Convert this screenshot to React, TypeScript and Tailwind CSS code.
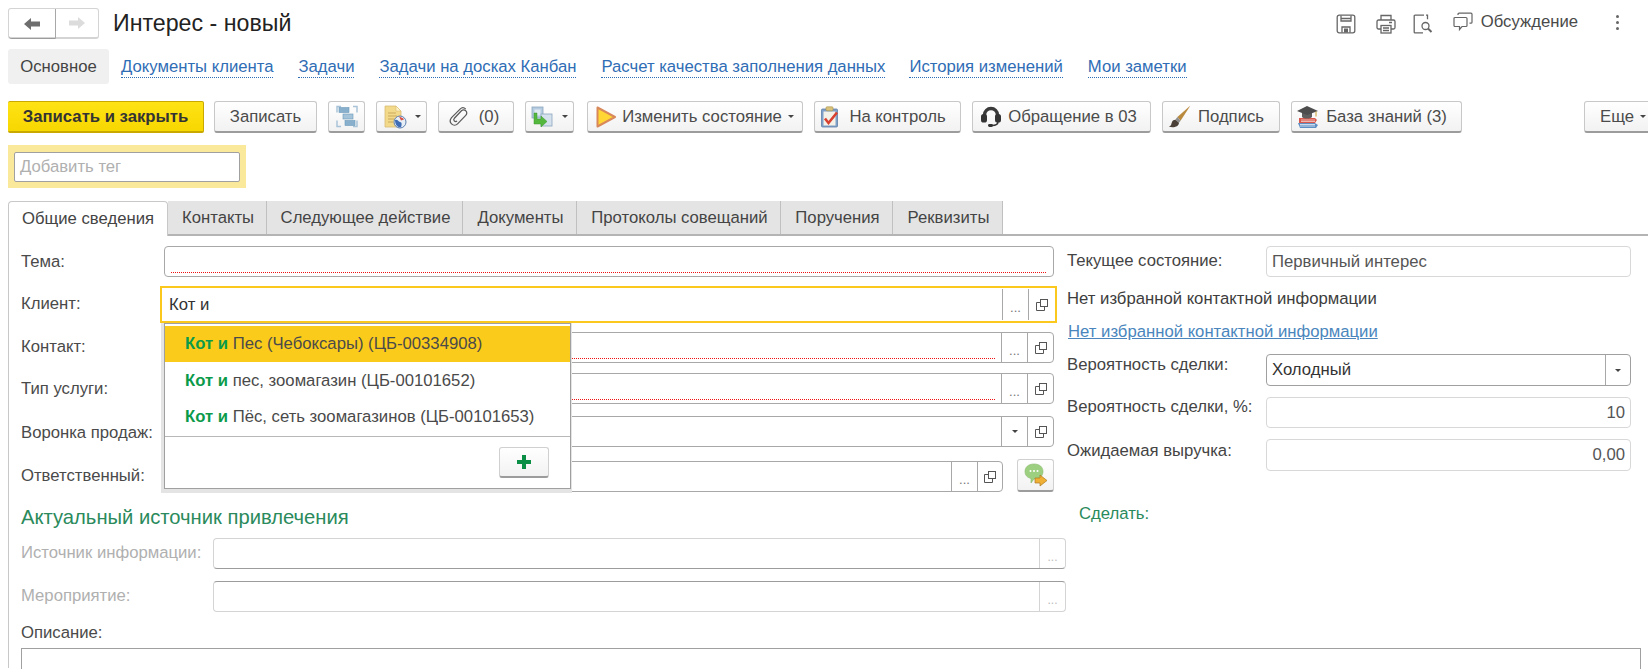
import React from "react";

const FONT = "font-['Liberation_Sans',Arial,sans-serif]";

function ArrowIcon({ dir, color }: { dir: "left" | "right"; color: string }) {
  return (
    <svg width="18" height="14" viewBox="0 0 18 14" className={dir === "right" ? "scale-x-[-1]" : ""}>
      <path d="M8 1 L1 7 L8 13 L8 9.5 L17 9.5 L17 4.5 L8 4.5 Z" fill={color} />
    </svg>
  );
}

function StructureIcon() {
  return (
    <svg width="22" height="23" viewBox="0 0 22 22">
      <path d="M1 7V1h4M1 15v6h4M21 7V1h-4M21 15v6h-4" fill="none" stroke="#a9c4d8" strokeWidth="1.5" />
      <rect x="3" y="2" width="10" height="5" fill="#88b0cd" stroke="#6b99bb" strokeWidth="0.6" />
      <rect x="7" y="8.500" width="10" height="5" fill="#a5c4da" stroke="#6b99bb" strokeWidth="0.6" />
      <rect x="9" y="15" width="10" height="5" fill="#88b0cd" stroke="#6b99bb" strokeWidth="0.6" />
    </svg>
  );
}

function DocGlobeIcon() {
  return (
    <svg width="24" height="24" viewBox="0 0 24 24">
      <path d="M2 1h11l5 5v16H2z" fill="#f3d98a" stroke="#d8bd74" strokeWidth="0.8" />
      <path d="M13 1v5h5z" fill="#fff3c8" stroke="#d8bd74" strokeWidth="0.6" />
      <path d="M5 8h8M5 11h9M5 14h6M5 17h5" stroke="#c9a95a" strokeWidth="1" />
      <circle cx="17" cy="17" r="6" fill="#e8eef6" stroke="#5c7fb0" strokeWidth="1" />
      <path d="M12 15c3-1 3 2 5 2s2 3 1 5c-3 1-6-2-6-7z" fill="#3f6db5" />
      <path d="M16 11.500c2 1 4 1 5 3l-3 1z" fill="#d9534a" />
    </svg>
  );
}

function PaperclipIcon() {
  return (
    <svg width="25" height="25" viewBox="0 0 22 22">
      <path
        d="M16.500 4.500 C15 3 13 3 11.500 4.500 L4 12 C2.500 13.800 2.500 16 4 17.500 C5.500 19 7.800 19 9.300 17.500 L16.500 10 C17.700 8.800 17.700 7 16.500 6 C15.400 5 13.800 5 12.700 6 L6.500 12.500 C5.800 13.300 5.800 14.300 6.500 15 C7.200 15.600 8.100 15.600 8.800 15"
        fill="none"
        stroke="#5a5a5a"
        strokeWidth="1.1"
      />
    </svg>
  );
}

function ArrowBoxesIcon() {
  return (
    <svg width="22" height="22" viewBox="0 0 22 22">
      <rect x="1" y="1" width="11" height="11" fill="#b4cbe0" stroke="#8aa5bd" strokeWidth="0.8" />
      <rect x="3.500" y="3.500" width="6" height="6" fill="#dfe9f2" />
      <rect x="10" y="8" width="11" height="12" fill="#d5e2ee" stroke="#8aa5bd" strokeWidth="0.8" />
      <path d="M6 7v6h4v-3l6 5.500-6 5.500v-3H3V7z" fill="#55b83e" stroke="#3a962c" strokeWidth="0.5" />
    </svg>
  );
}

function PlayIcon() {
  return (
    <svg width="20" height="22" viewBox="0 0 20 22">
      <path d="M1.500 1.500 L19 11 L1.500 20.500 Z" fill="#ffd633" stroke="#d8885a" strokeWidth="2" strokeLinejoin="round" />
    </svg>
  );
}

function ClipboardIcon() {
  return (
    <svg width="20" height="22" viewBox="0 0 20 22">
      <rect x="1.500" y="3" width="16" height="18" rx="1" fill="#7fa0c8" stroke="#5f7fa8" strokeWidth="0.8" />
      <rect x="3.500" y="5.500" width="12" height="14" fill="#f4f1e8" />
      <rect x="6" y="0.800" width="7" height="4" rx="1" fill="#d9c27a" stroke="#a8924f" strokeWidth="0.6" />
      <path d="M5 12.500 L8.500 17 L17 6.500" fill="none" stroke="#d8402f" strokeWidth="2.600" />
    </svg>
  );
}

function HeadsetIcon() {
  return (
    <svg width="22" height="23" viewBox="0 0 22 22">
      <path d="M4.500 12V9.500a6.500 6.500 0 0 1 13 0V12" fill="none" stroke="#3a3a3a" strokeWidth="3.400" />
      <rect x="1" y="8.500" width="6" height="8.500" rx="2.600" fill="#333" />
      <rect x="15" y="8.500" width="6" height="8.500" rx="2.600" fill="#333" />
      <path d="M18 16c0 3-3 4-6 4" fill="none" stroke="#333" strokeWidth="1.500" />
      <rect x="8" y="18.500" width="5" height="3" rx="1.400" fill="#333" />
    </svg>
  );
}

function BrushIcon() {
  return (
    <svg width="23" height="23" viewBox="0 0 22 22">
      <path d="M21.500 0.500 L9 11.500 L12 15 Z" fill="#b98a3e" />
      <path d="M9 11.500 L12 15 L10.500 17 L7 14 Z" fill="#8d8d8d" />
      <path d="M7 14 C4 14 3.500 17 3 19 C2.500 20 1.500 20.500 1 20.800 C5 22 10.500 21 10.500 17 Z" fill="#4a4038" />
    </svg>
  );
}

function BooksIcon() {
  return (
    <svg width="24" height="24" viewBox="0 0 24 24">
      <path d="M2 18h17l3 2-2 3H4z" fill="#5d8fc4" />
      <path d="M4 19.500h15M4 21h15" stroke="#e9eef5" strokeWidth="0.8" />
      <path d="M3 13h16l2 2-2 3H3z" fill="#d9574b" />
      <path d="M5 15h14M5 16.500h14" stroke="#f5e3de" strokeWidth="0.7" />
      <path d="M6 7v5c2 2 8 2 10 0V7z" fill="#5e5e5e" />
      <path d="M11 1 L22 6 L11 10 L1 6 Z" fill="#4d4d4d" />
      <path d="M20 6.500v5" stroke="#c9a030" strokeWidth="1" />
    </svg>
  );
}

function SaveIcon() {
  return (
    <svg width="20" height="20" viewBox="0 0 20 20" fill="none" stroke="#666" strokeWidth="1.300">
      <rect x="1.200" y="1.200" width="17.600" height="17.600" rx="2" />
      <path d="M5 1.500V7h10V1.500M5 4.500h10" />
      <path d="M6 18.500V13h8v5.500" />
      <rect x="8" y="14.500" width="4" height="4" fill="#666" stroke="none" />
    </svg>
  );
}

function PrintIcon() {
  return (
    <svg width="20" height="20" viewBox="0 0 20 20" fill="none" stroke="#666" strokeWidth="1.300">
      <path d="M5 6V1.500h10V6" />
      <path d="M5 15H2.500A1.500 1.500 0 0 1 1 13.500V7.500A1.500 1.500 0 0 1 2.500 6h15A1.500 1.500 0 0 1 19 7.500v6a1.500 1.500 0 0 1-1.500 1.500H15" />
      <rect x="5" y="11.500" width="10" height="7.500" />
      <path d="M7 14h6M7 16.500h6M13 8.500h3" />
    </svg>
  );
}

function PreviewIcon() {
  return (
    <svg width="20" height="20" viewBox="0 0 20 20" fill="none" stroke="#666" strokeWidth="1.300">
      <path d="M11 1.200H2.500A1 1 0 0 0 1.200 2.500v15a1 1 0 0 0 1.300 1.300H10M13 1.200h1.500v4" />
      <circle cx="12.500" cy="12" r="3.500" />
      <path d="M15 14.500l3.500 3.500" strokeWidth="2" />
    </svg>
  );
}

function ChatIcon() {
  return (
    <svg width="20" height="20" viewBox="0 0 20 20" fill="none" stroke="#666" strokeWidth="1.200">
      <path d="M2 5.500h11a1 1 0 0 1 1 1v7a1 1 0 0 1-1 1H9l-2.500 3v-3H2a1 1 0 0 1-1-1v-7a1 1 0 0 1 1-1z" />
      <path d="M5 3V2.200a1 1 0 0 1 1-1h12a1 1 0 0 1 1 1v8a1 1 0 0 1-1 1h-1.500" />
    </svg>
  );
}

function CopyIcon() {
  return (
    <svg width="12" height="12" viewBox="0 0 12 12" fill="none" stroke="#555" strokeWidth="1">
      <rect x="4.500" y="0.500" width="7" height="7" />
      <path d="M4.500 3.500H0.500V11.500H8.500V7.500" />
    </svg>
  );
}

function GreenChatIcon() {
  return (
    <svg width="24" height="24" viewBox="0 0 24 24">
      <path d="M10 1c5.500 0 9 3 9 7.500S15.500 16 10 16l-3 4v-4.500C3 14.500 1 12 1 8.500 1 4 4.500 1 10 1z" fill="#9ccf7f" stroke="#86b96a" strokeWidth="0.6" />
      <circle cx="6.500" cy="8" r="1" fill="#fff" />
      <circle cx="10" cy="8" r="1" fill="#fff" />
      <circle cx="13.500" cy="8" r="1" fill="#fff" />
      <path d="M11 15h5v-3l7 5.500-7 5.500v-3h-5z" fill="#f0b035" stroke="#a97a20" strokeWidth="0.7" />
    </svg>
  );
}

function Caret() {
  return <span className="inline-block w-0 h-0 border-x-[3.5px] border-x-transparent border-t-[3.5px] border-t-[#444]" />;
}

function ToolBtn({ className, children }: { className: string; children: React.ReactNode }) {
  return (
    <div
      className={`h-[32px] shrink-0 flex items-center justify-center rounded-[3px] border border-[#c8c8c8] border-b-[#9c9c9c] border-b-2 bg-gradient-to-b from-white to-[#f2f2f2] text-[16.7px] text-[#4b4b4b] whitespace-nowrap ${className}`}
    >
      {children}
    </div>
  );
}

function Toolbar() {
  return (
    <div className="flex gap-[11px] pl-[8px] mt-[17px]">
      <div className="h-[32px] w-[196px] mr-[-1px] shrink-0 flex items-center justify-center rounded-[2px] border border-[#c9a800] border-l-0 border-b-2 bg-gradient-to-b from-[#ffe314] to-[#f7d700] text-[16.7px] font-bold text-[#333]">
        Записать и закрыть
      </div>
      <ToolBtn className="w-[103px]">Записать</ToolBtn>
      <ToolBtn className="w-[37px]">
        <StructureIcon />
      </ToolBtn>
      <ToolBtn className="w-[51px] gap-[8px]">
        <DocGlobeIcon />
        <Caret />
      </ToolBtn>
      <ToolBtn className="w-[76px] gap-[7px] pr-[6px]">
        <PaperclipIcon />
        <span>(0)</span>
      </ToolBtn>
      <ToolBtn className="w-[49px] gap-[9px]">
        <ArrowBoxesIcon />
        <Caret />
      </ToolBtn>
      <ToolBtn className="w-[216px] ml-[2px] gap-[6px]">
        <PlayIcon />
        <span>Изменить состояние</span>
        <Caret />
      </ToolBtn>
      <ToolBtn className="w-[147px] gap-[9px] pr-[9px]">
        <ClipboardIcon />
        <span>На контроль</span>
      </ToolBtn>
      <ToolBtn className="w-[179px] gap-[6px] pr-[6px]">
        <HeadsetIcon />
        <span>Обращение в 03</span>
      </ToolBtn>
      <ToolBtn className="w-[118px] gap-[7px] pr-[10px]">
        <BrushIcon />
        <span>Подпись</span>
      </ToolBtn>
      <ToolBtn className="w-[171px] gap-[6px] pr-[10px]">
        <BooksIcon />
        <span>База знаний (3)</span>
      </ToolBtn>
      <ToolBtn className="w-[84px] ml-auto mr-[-20px] justify-start pl-[15px] gap-[6px]">
        <span>Еще</span>
        <Caret />
      </ToolBtn>
    </div>
  );
}

const links = [
  { text: "Документы клиента", cls: "ml-[12px]" },
  { text: "Задачи", cls: "ml-[25px]" },
  { text: "Задачи на досках Канбан", cls: "ml-[25px]" },
  { text: "Расчет качества заполнения данных", cls: "ml-[25px]" },
  { text: "История изменений", cls: "ml-[24px]" },
  { text: "Мои заметки", cls: "ml-[25px]" },
];

const tabs = [
  { text: "Контакты", cls: "w-[99px]" },
  { text: "Следующее действие", cls: "w-[196px]" },
  { text: "Документы", cls: "w-[114px]" },
  { text: "Протоколы совещаний", cls: "w-[204px]" },
  { text: "Поручения", cls: "w-[112px]" },
  { text: "Реквизиты", cls: "w-[110px]" },
];

function FieldBtn({ children, narrow }: { children: React.ReactNode; narrow?: boolean }) {
  return (
    <div className={`${narrow ? "w-[25px]" : "w-[26px]"} h-full shrink-0 flex items-center justify-center border-l border-[#a8a8a8] text-[#666]`}>{children}</div>
  );
}

function Dots() {
  return <span className="text-[13px] leading-none pt-[5px] text-[#777]">...</span>;
}

function Row({ label, labelCls, className, children }: { label: string; labelCls: string; className: string; children: React.ReactNode }) {
  return (
    <div className={`flex items-start ${className}`}>
      <div className={`w-[144px] shrink-0 text-[16.7px] leading-[20px] text-[#4a4a4a] ${labelCls}`}>{label}</div>
      {children}
    </div>
  );
}

function Required({ right }: { right: string }) {
  return <div className={`absolute left-[6px] bottom-[3px] border-b border-dotted border-[#f01010] ${right}`} />;
}

function LeftColumn() {
  return (
    <div className="w-[1046px] shrink-0 ml-[12px]">
      <Row label="Тема:" labelCls="pt-[6px]" className="mt-[10px]">
        <div className="relative w-[890px] ml-[-1px] h-[31px] rounded-[4px] border border-[#a8a8a8]">
          <Required right="right-[7px]" />
        </div>
      </Row>
      <Row label="Клиент:" labelCls="pt-[8px]" className="mt-[9px]">
        <div className="w-[897px] ml-[-5px] h-[37px] border-2 border-[#fbc91d] flex items-center pr-[1px]">
          <div className="flex-1 pl-[7px] text-[16.7px] text-[#333]">Кот и</div>
          <div className="flex h-[31px]">
            <FieldBtn>
              <Dots />
            </FieldBtn>
            <FieldBtn>
              <CopyIcon />
            </FieldBtn>
          </div>
        </div>
      </Row>
      <Row label="Контакт:" labelCls="pt-[5px]" className="mt-[9px]">
        <div className="relative w-[890px] ml-[-1px] h-[31px] rounded-[4px] border border-[#a8a8a8] flex justify-end">
          <Required right="right-[58px]" />
          <FieldBtn>
            <Dots />
          </FieldBtn>
          <FieldBtn>
            <CopyIcon />
          </FieldBtn>
        </div>
      </Row>
      <Row label="Тип услуги:" labelCls="pt-[6px]" className="mt-[10px]">
        <div className="relative w-[890px] ml-[-1px] h-[31px] rounded-[4px] border border-[#a8a8a8] flex justify-end">
          <Required right="right-[58px]" />
          <FieldBtn>
            <Dots />
          </FieldBtn>
          <FieldBtn>
            <CopyIcon />
          </FieldBtn>
        </div>
      </Row>
      <Row label="Воронка продаж:" labelCls="pt-[7px] whitespace-nowrap" className="mt-[12px]">
        <div className="w-[890px] ml-[-1px] h-[31px] rounded-[4px] border border-[#a8a8a8] flex justify-end">
          <FieldBtn>
            <Caret />
          </FieldBtn>
          <FieldBtn>
            <CopyIcon />
          </FieldBtn>
        </div>
      </Row>
      <Row label="Ответственный:" labelCls="pt-[5px] whitespace-nowrap" className="mt-[14px]">
        <div className="w-[839px] ml-[-1px] h-[31px] rounded-[4px] border border-[#a8a8a8] flex justify-end">
          <FieldBtn>
            <Dots />
          </FieldBtn>
          <FieldBtn narrow>
            <CopyIcon />
          </FieldBtn>
        </div>
        <div className="w-[37px] h-[33px] mt-[-2px] ml-[14px] flex items-center justify-center rounded-[3px] border border-[#d0d0d0] border-b-[#9c9c9c] border-b-2 bg-gradient-to-b from-white to-[#f2f2f2]">
          <GreenChatIcon />
        </div>
      </Row>
      <div className="mt-[13px] h-[24px] text-[20.2px] leading-[24px] text-[#2a8a5c] whitespace-nowrap">Актуальный источник привлечения</div>
      <div className="flex items-start mt-[9px]">
        <div className="w-[192px] shrink-0 text-[16.7px] leading-[20px] pt-[5px] text-[#b0b0b0] whitespace-nowrap">Источник информации:</div>
        <div className="w-[853px] h-[31px] rounded-[4px] border border-[#d4d4d4] border-b-[#9c9c9c] flex justify-end">
          <div className="w-[26px] border-l border-[#d4d4d4] flex items-center justify-center text-[#bbb] text-[12px] pt-[6px]">...</div>
        </div>
      </div>
      <div className="flex items-start mt-[12px]">
        <div className="w-[192px] shrink-0 text-[16.7px] leading-[20px] pt-[5px] text-[#b0b0b0]">Мероприятие:</div>
        <div className="w-[853px] h-[31px] rounded-[4px] border border-[#d4d4d4] border-t-[#9c9c9c] flex justify-end">
          <div className="w-[26px] border-l border-[#d4d4d4] flex items-center justify-center text-[#bbb] text-[12px] pt-[6px]">...</div>
        </div>
      </div>
    </div>
  );
}

function RoField({ className, children }: { className: string; children?: React.ReactNode }) {
  return (
    <div className={`w-[365px] h-[31px] rounded-[4px] border border-[#d8d8d8] flex items-center px-[5px] text-[16.7px] text-[#555] ${className}`}>{children}</div>
  );
}

function RightColumn() {
  return (
    <div className="w-[565px] shrink-0 text-[16.7px] text-[#444]">
      <div className="flex items-start mt-[10px]">
        <div className="w-[199px] shrink-0 leading-[20px] pt-[5px] whitespace-nowrap">Текущее состояние:</div>
        <RoField className="">Первичный интерес</RoField>
      </div>
      <div className="mt-[12px] h-[20px] leading-[20px] text-[#3d3d3d] whitespace-nowrap">Нет избранной контактной информации</div>
      <div className="mt-[13px] h-[20px] leading-[20px] pl-[1px] text-[#4a86bd] underline whitespace-nowrap">Нет избранной контактной информации</div>
      <div className="flex items-start mt-[12px]">
        <div className="w-[199px] shrink-0 leading-[20px] pt-[1px] whitespace-nowrap">Вероятность сделки:</div>
        <div className="w-[365px] h-[32px] rounded-[4px] border border-[#a0a0a0] flex items-center justify-between pl-[5px] text-[#333]">
          <span>Холодный</span>
          <div className="w-[25px] h-full border-l border-[#a8a8a8] flex items-center justify-center">
            <Caret />
          </div>
        </div>
      </div>
      <div className="flex items-start mt-[11px]">
        <div className="w-[199px] shrink-0 leading-[20px] whitespace-nowrap">Вероятность сделки, %:</div>
        <RoField className="justify-end">10</RoField>
      </div>
      <div className="flex items-start mt-[11px]">
        <div className="w-[199px] shrink-0 leading-[20px] pt-[2px] whitespace-nowrap">Ожидаемая выручка:</div>
        <RoField className="justify-end h-[32px]">0,00</RoField>
      </div>
      <div className="mt-[33px] ml-[12px] leading-[20px] text-[#2a8a5c]">Сделать:</div>
    </div>
  );
}

function Suggest({ rest, active }: { rest: string; active?: boolean }) {
  return (
    <div className={`h-[36px] flex items-center pl-[20px] text-[16.7px] text-[#4a4a4a] whitespace-nowrap ${active ? "bg-[#fbcb1c]" : "pt-[2px]"}`}>
      <b className="text-[#0b9a4a]">Кот и</b>
      <span>&nbsp;{rest}</span>
    </div>
  );
}

function Popup() {
  return (
    <div className="absolute left-[152px] top-[87px] w-[411px] h-[170px] bg-[#e4e4e4] pl-[3px] pb-[4px] pr-[1px]">
      <div className="h-full bg-white border border-[#a0a0a0] pt-[2px]">
        <Suggest active rest="Пес (Чебоксары) (ЦБ-00334908)" />
        <Suggest rest="пес, зоомагазин (ЦБ-00101652)" />
        <Suggest rest="Пёс, сеть зоомагазинов (ЦБ-00101653)" />
        <div className="border-t border-[#b8b8b8] mt-[2px] pt-[10px] flex justify-end pr-[21px]">
          <div className="w-[50px] h-[31px] flex items-center justify-center rounded-[3px] border border-[#d0d0d0] border-b-[#9c9c9c] border-b-2 bg-gradient-to-b from-white to-[#f2f2f2]">
            <svg width="14" height="14" viewBox="0 0 14 14">
              <path d="M5 0h4v5h5v4H9v5H5V9H0V5h5z" fill="#0b8f46" />
            </svg>
          </div>
        </div>
      </div>
    </div>
  );
}

export default function App() {
  return (
    <div className={`${FONT} w-[1648px] h-[669px] overflow-hidden bg-white`}>
      {/* шапка формы */}
      <div className="flex items-center h-[31px] mt-[8px] pl-[8px] pr-[16px]">
        <div className="flex w-[91px] h-[31px] rounded-[3px] border border-[#d4d4d4] border-b-2">
          <div className="w-[47px] flex items-center justify-center border-r border-[#a8a8a8] border-b border-b-[#9c9c9c] rounded-l-[3px] mb-[-2px]">
            <ArrowIcon dir="left" color="#6e6e6e" />
          </div>
          <div className="flex-1 flex items-center justify-center">
            <ArrowIcon dir="right" color="#dcdcdc" />
          </div>
        </div>
        <div className="ml-[14px] text-[23.2px] text-[#222] whitespace-nowrap">Интерес - новый</div>
        <div className="ml-auto flex items-center">
          <div className="mt-[2px]">
            <SaveIcon />
          </div>
          <div className="ml-[20px] mt-[2px]">
            <PrintIcon />
          </div>
          <div className="ml-[17px] mt-[2px]">
            <PreviewIcon />
          </div>
          <div className="ml-[20px] mt-[-3px]">
            <ChatIcon />
          </div>
          <div className="ml-[8px] mt-[-3px] text-[16.7px] text-[#4a4a4a]">Обсуждение</div>
          <div className="ml-[38px] mr-[13px] mt-[-2px] flex flex-col gap-[3px]">
            <div className="w-[3px] h-[3px] rounded-full bg-[#666]" />
            <div className="w-[3px] h-[3px] rounded-full bg-[#666]" />
            <div className="w-[3px] h-[3px] rounded-full bg-[#666]" />
          </div>
        </div>
      </div>

      {/* панель разделов */}
      <div className="flex items-center h-[35px] mt-[10px] pl-[8px]">
        <div className="w-[101px] h-full flex items-center justify-center rounded-[3px] bg-[#f0f0f0] text-[16.7px] text-[#444]">Основное</div>
        {links.map((l) => (
          <div key={l.text} className={`${l.cls} mt-[2px] text-[16.7px] leading-[20px] text-[#2f6db5] border-b border-dotted border-[#2f6db5] whitespace-nowrap`}>
            {l.text}
          </div>
        ))}
      </div>

      <Toolbar />

      <div className="ml-[8px] mt-[12px] w-[238px] h-[43px] bg-[#fbe99b] pt-[7px] pl-[6px]">
        <div className="w-[226px] h-[30px] bg-white border border-[#a0a0a0] rounded-[2px] pl-[5px] text-[16.7px] leading-[28px] text-[#b0b0b0]">Добавить тег</div>
      </div>

      {/* закладки */}
      <div className="flex h-[35px] mt-[13px] pl-[8px]">
        <div className="w-[160px] h-[35px] flex items-center justify-center rounded-t-[4px] border border-[#c8c8c8] border-b-0 bg-white text-[16.7px] text-[#444]">Общие сведения</div>
        <div className="flex-1 flex h-[35px] border-b-2 border-[#b4b4b4]">
          {tabs.map((t) => (
            <div key={t.text} className={`${t.cls} flex items-center justify-center pl-[2px] bg-[#e4e4e4] border-r border-[#c0c0c0] text-[16.7px] text-[#444] whitespace-nowrap`}>
              {t.text}
            </div>
          ))}
        </div>
      </div>

      <div className="relative ml-[8px] h-[432px] border-l border-[#c8c8c8]">
        <div className="flex">
          <LeftColumn />
          <RightColumn />
        </div>
        <div className="ml-[12px] mt-[11px] text-[16.7px] leading-[20px] text-[#4a4a4a]">Описание:</div>
        <div className="ml-[12px] mt-[5px] w-[1620px] h-[40px] border border-[#a0a0a0]" />
        <Popup />
      </div>
    </div>
  );
}
